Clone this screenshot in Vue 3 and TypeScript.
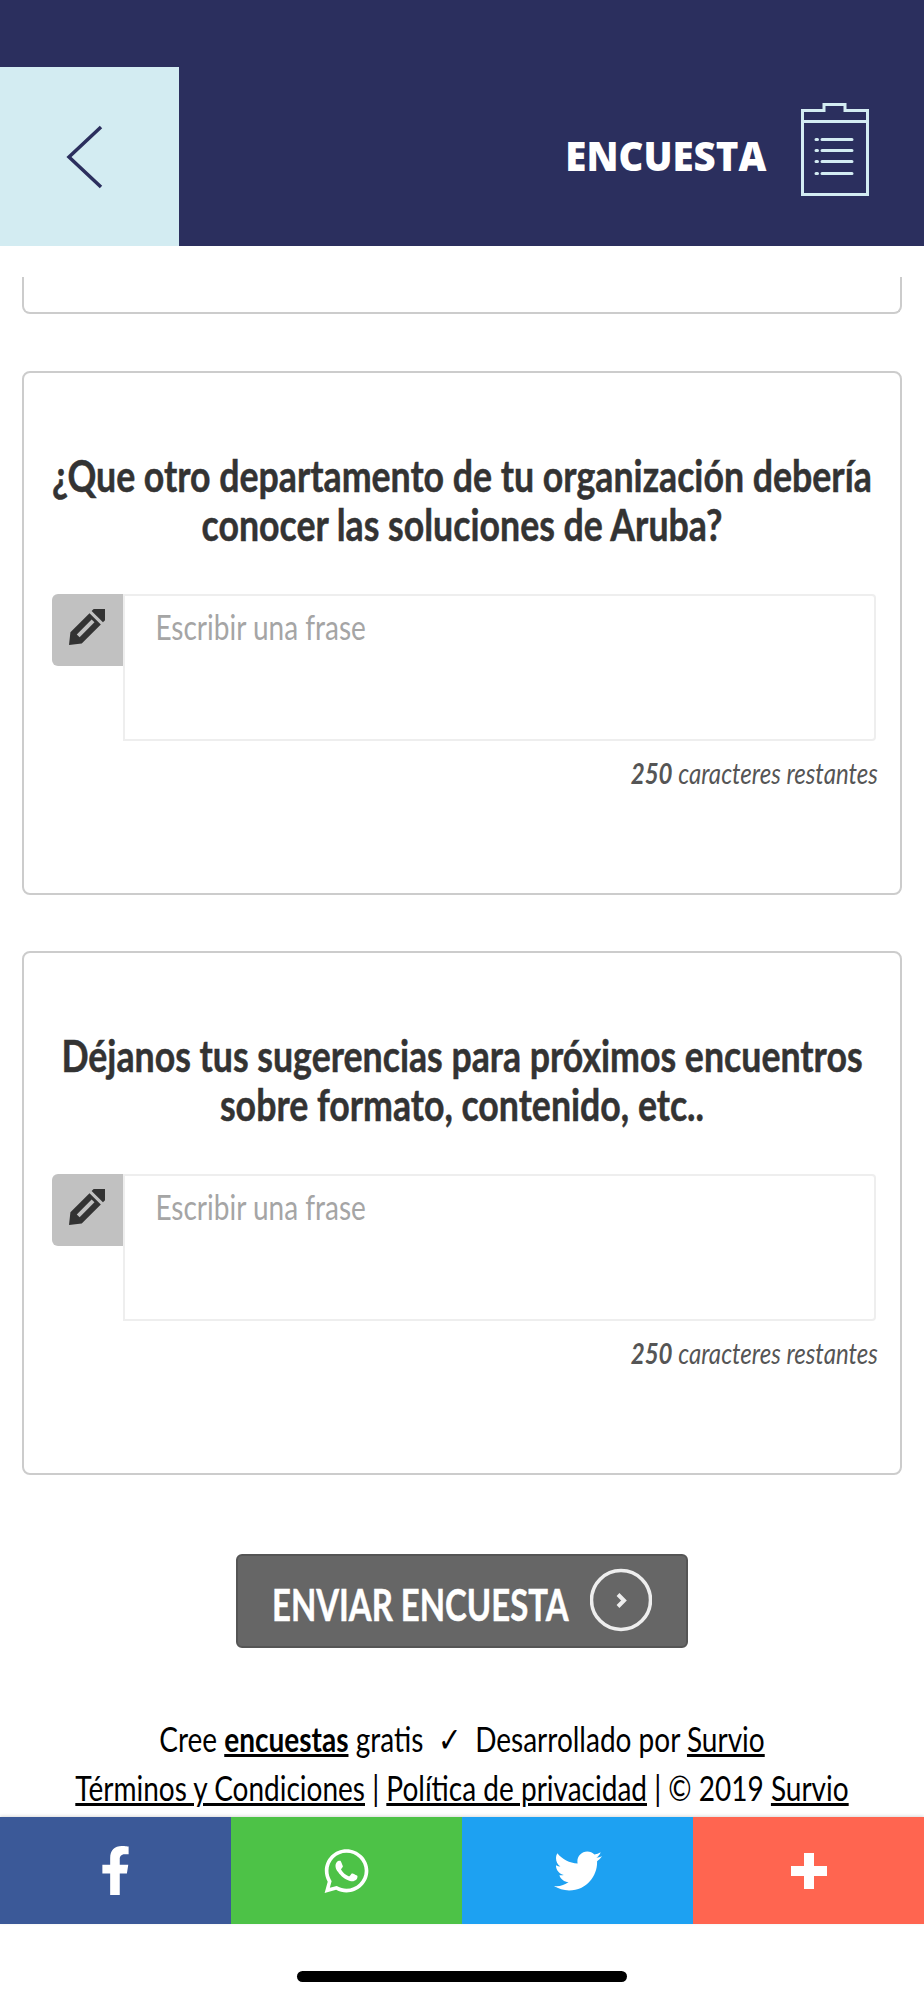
<template>
  <div class="page">
    <header class="top">
      <a class="back">
        <svg width="38" height="64" viewBox="0 0 38 64" fill="none" stroke="#2b2f5e" stroke-width="3.5">
          <path d="M35 2 3 32l32 30" />
        </svg>
      </a>
      <div class="title">
        <span>ENCUESTA</span>
        <svg class="clip" width="68" height="93" viewBox="0 0 68 93" fill="none" stroke="#d3ecf2" stroke-width="3">
          <path d="M1.500 7.500H23V1.500h21v6h22.500V91.500H1.500ZM1.500 18.500h65" />
          <path d="M21 36.500h30M21 47.500h30M21 58.500h30M21 70.500h30" stroke-linecap="round" />
          <path d="M15 36.500h1.500M15 47.500h1.500M15 58.500h1.500M15 70.500h1.500" stroke-linecap="round" />
        </svg>
      </div>
    </header>

    <main class="content">
      <div class="card-end"></div>

      <section v-for="q in questions" :key="q[0]" class="card">
        <h2>
          <span v-for="line in q" :key="line">{{ line }}</span>
        </h2>
        <div class="field">
          <span class="field-icon">
            <svg width="36" height="36" viewBox="0 0 36 36" fill="#333">
              <g transform="translate(0 36) rotate(-45)">
                <path fill-rule="evenodd" d="M0 0 10-8h27V8H10ZM13-2V2H34V-2Z" />
                <path d="M40-8h3a8 8 0 0 1 0 16h-3Z" />
              </g>
            </svg>
          </span>
          <div class="box">
            <textarea placeholder="Escribir una frase"></textarea>
          </div>
        </div>
        <p class="count"><b>250</b> caracteres restantes</p>
      </section>

      <div class="send-wrap">
        <button class="send" type="button">
          <span>ENVIAR ENCUESTA</span>
          <svg width="62" height="64" viewBox="0 0 62 64" fill="none" stroke="#eee">
            <circle cx="31" cy="32" r="29.500" stroke-width="3.500" />
            <path d="m28 26.500 6 6-6 6" stroke-width="4" />
          </svg>
        </button>
      </div>

      <footer class="legal">
        <p>Cree <a><b>encuestas</b></a> gratis &nbsp;✓&nbsp; Desarrollado por <a>Survio</a></p>
        <p><a>Términos y Condiciones</a> | <a>Política de privacidad</a> | © 2019 <a>Survio</a></p>
      </footer>
    </main>

    <nav class="share">
      <a class="fb">
        <svg width="31" height="49" viewBox="0 0 320 512" fill="#fff"><path d="M279.140 288l14.220-92.660h-88.910v-60.130c0-25.350 12.420-50.060 52.240-50.060h40.420V6.260S260.430 0 225.360 0c-73.220 0-121.080 44.380-121.080 124.720v70.620H22.890V288h81.390v224h100.170V288z" /></svg>
      </a>
      <a class="wa">
        <svg width="49" height="50" viewBox="0 0 448 512" fill="#fff"><path d="M380.900 97.100C339 55.100 283.200 32 223.900 32c-122.400 0-222 99.600-222 222 0 39.100 10.200 77.300 29.600 111L0 480l117.700-30.900c32.400 17.700 68.900 27 106.100 27h.1c122.300 0 224.100-99.600 224.100-222 0-59.300-25.200-115-67.100-157zm-157 341.600c-33.200 0-65.700-8.900-94-25.700l-6.700-4-69.800 18.300L72 359.200l-4.400-7c-18.500-29.400-28.200-63.300-28.200-98.200 0-101.700 82.800-184.500 184.600-184.500 49.300 0 95.600 19.200 130.400 54.100 34.800 34.900 56.200 81.200 56.100 130.500 0 101.800-84.900 184.600-186.600 184.600zm101.200-138.200c-5.500-2.800-32.800-16.200-37.900-18-5.100-1.900-8.800-2.800-12.500 2.800-3.700 5.600-14.300 18-17.600 21.800-3.200 3.700-6.500 4.200-12 1.400-32.600-16.300-54-29.100-75.500-66-5.700-9.800 5.700-9.100 16.300-30.300 1.800-3.700.9-6.900-.5-9.700-1.400-2.800-12.500-30.100-17.100-41.200-4.500-10.800-9.100-9.300-12.500-9.500-3.200-.2-6.900-.2-10.600-.2-3.700 0-9.700 1.400-14.800 6.900-5.100 5.600-19.400 19-19.400 46.300 0 27.300 19.900 53.700 22.600 57.400 2.800 3.700 39.100 59.700 94.800 83.800 35.200 15.200 49 16.500 66.600 13.900 10.700-1.600 32.800-13.400 37.400-26.400 4.600-13 4.600-24.100 3.200-26.400-1.300-2.500-5-3.900-10.500-6.600z" /></svg>
      </a>
      <a class="tw">
        <svg width="48" height="48" viewBox="0 0 512 512" fill="#fff"><path d="M459.370 151.716c.325 4.548.325 9.097.325 13.645 0 138.720-105.583 298.558-298.558 298.558-59.452 0-114.680-17.219-161.137-47.106 8.447.974 16.568 1.299 25.340 1.299 49.055 0 94.213-16.568 130.274-44.832-46.132-.975-84.792-31.188-98.112-72.772 6.498.974 12.995 1.624 19.818 1.624 9.421 0 18.843-1.300 27.614-3.573-48.081-9.747-84.143-51.980-84.143-102.985v-1.299c13.969 7.797 30.214 12.670 47.431 13.319-28.264-18.843-46.781-51.005-46.781-87.391 0-19.492 5.197-37.360 14.294-52.954 51.655 63.675 129.300 105.258 216.365 109.807-1.624-7.797-2.599-15.918-2.599-24.040 0-57.828 46.782-104.934 104.934-104.934 30.213 0 57.502 12.670 76.670 33.137 23.715-4.548 46.456-13.320 66.599-25.340-7.798 24.366-24.366 44.833-46.132 57.827 21.117-2.273 41.584-8.122 60.426-16.243-14.292 20.791-32.161 39.308-52.628 54.253z" /></svg>
      </a>
      <a class="more">
        <svg width="36" height="36" viewBox="0 0 36 36" fill="#fff"><path d="M13 0h10v13h13v10H23v13H13V23H0V13h13z" /></svg>
      </a>
    </nav>

    <div class="home-bar"><span></span></div>
  </div>
</template>

<script setup lang="ts">
const questions: string[][] = [
  ['¿Que otro departamento de tu organización debería', 'conocer las soluciones de Aruba?'],
  ['Déjanos tus sugerencias para próximos encuentros', 'sobre formato, contenido, etc..'],
]
</script>

<style scoped>
/* no narrow family installed, so the condensed text is Lato squeezed with scaleX */
.page {
  width: 924px;
  height: 2000px;
  overflow: hidden;
  background: #fff;
  font-family: Lato, "Liberation Sans", sans-serif;
  color: #000;
}

.top {
  display: flex;
  justify-content: space-between;
  padding-top: 67px;
  background: #2b2f5e;
}

.back {
  display: flex;
  align-items: center;
  justify-content: center;
  width: 179px;
  height: 179px;
  padding-right: 10px;
  box-sizing: border-box;
  background: #d3ecf2;
}

.title {
  display: flex;
  align-items: center;
  gap: 35px;
  padding-right: 55px;
  color: #fff;
  font-family: "Open Sans", sans-serif;
  font-size: 40px;
  font-weight: 800;
}

.title span {
  margin-bottom: 2px;
  transform: scaleX(0.96);
  transform-origin: right;
}

.clip {
  margin-bottom: 14px;
}

.content {
  height: 1571px;
  padding: 31px 22px 0;
  box-sizing: border-box;
}

.card-end {
  height: 37px;
  border: 2px solid #ccc;
  border-top: 0;
  border-radius: 0 0 8px 8px;
  box-sizing: border-box;
  margin-bottom: 57px;
}

.card {
  height: 524px;
  margin-bottom: 56px;
  padding: 78px 24px 0;
  border: 2px solid #ccc;
  border-radius: 8px;
  box-sizing: border-box;
}

h2 {
  margin: 0 0 45px;
  color: #333;
  font-size: 43px;
  font-weight: 700;
  line-height: 49px;
  text-align: center;
  -webkit-text-stroke: 0.5px #333;
}

h2 span {
  display: block;
  margin: 0 -100px;
  transform: scaleX(0.83);
  white-space: nowrap;
}

.field {
  display: flex;
  align-items: flex-start;
  margin-left: 4px;
}

.field-icon {
  display: flex;
  flex: none;
  align-items: flex-start;
  justify-content: center;
  width: 71px;
  height: 72px;
  padding: 15px 1px 0 0;
  box-sizing: border-box;
  border-radius: 6px 0 0 6px;
  background: #c1c1c1;
}

.box {
  flex: 1;
  height: 147px;
  border: 2px solid #eee;
  border-radius: 0 4px 4px 0;
  box-sizing: border-box;
  overflow: hidden;
}

textarea {
  display: block;
  width: 125%;
  height: 100%;
  padding: 12px 38px;
  border: 0;
  box-sizing: border-box;
  outline: 0;
  resize: none;
  background: none;
  font-family: inherit;
  font-size: 35px;
  line-height: 36px;
  transform: scaleX(0.8);
  transform-origin: left;
}

textarea::placeholder {
  color: #a5a5a5;
  opacity: 1;
}

.count {
  margin: 15px -2px 0 0;
  color: #555;
  font-size: 29px;
  font-style: italic;
  line-height: 34px;
  text-align: right;
  transform: scaleX(0.83);
  transform-origin: right;
}

.send-wrap {
  display: flex;
  justify-content: center;
  padding-top: 23px;
}

.send {
  display: flex;
  align-items: center;
  gap: 22px;
  width: 452px;
  height: 94px;
  padding: 0 0 0 34px;
  border: 2px solid #555;
  border-radius: 6px;
  box-sizing: border-box;
  background: #666;
  color: #fff;
  font-family: inherit;
  font-size: 43px;
  font-weight: 700;
}

.send span {
  width: 296px;
  padding-top: 7px;
  white-space: nowrap;
  transform: scaleX(0.765);
  transform-origin: left;
  -webkit-text-stroke: 0.5px #fff;
}

.send svg {
  flex: none;
  margin-bottom: 2px;
}

.legal {
  margin-top: 66px;
  font-size: 35px;
  line-height: 49px;
  text-align: center;
}

.legal p {
  margin: 0 -100px;
  white-space: nowrap;
  transform: scaleX(0.8);
}

.legal a {
  text-decoration: underline;
}

.share {
  display: grid;
  grid-template-columns: repeat(4, 1fr);
  height: 107px;
  box-shadow: 0 -1px 3px rgba(0, 0, 0, 0.15);
}

.share a {
  display: flex;
  align-items: center;
  justify-content: center;
}

.fb { background: #3b5998; }
.wa { background: #4dc247; }
.tw { background: #1da1f2; }
.more { background: #ff6550; }

.home-bar {
  display: flex;
  justify-content: center;
  padding-top: 47px;
}

.home-bar span {
  width: 330px;
  height: 11px;
  border-radius: 6px;
  background: #000;
}
</style>
